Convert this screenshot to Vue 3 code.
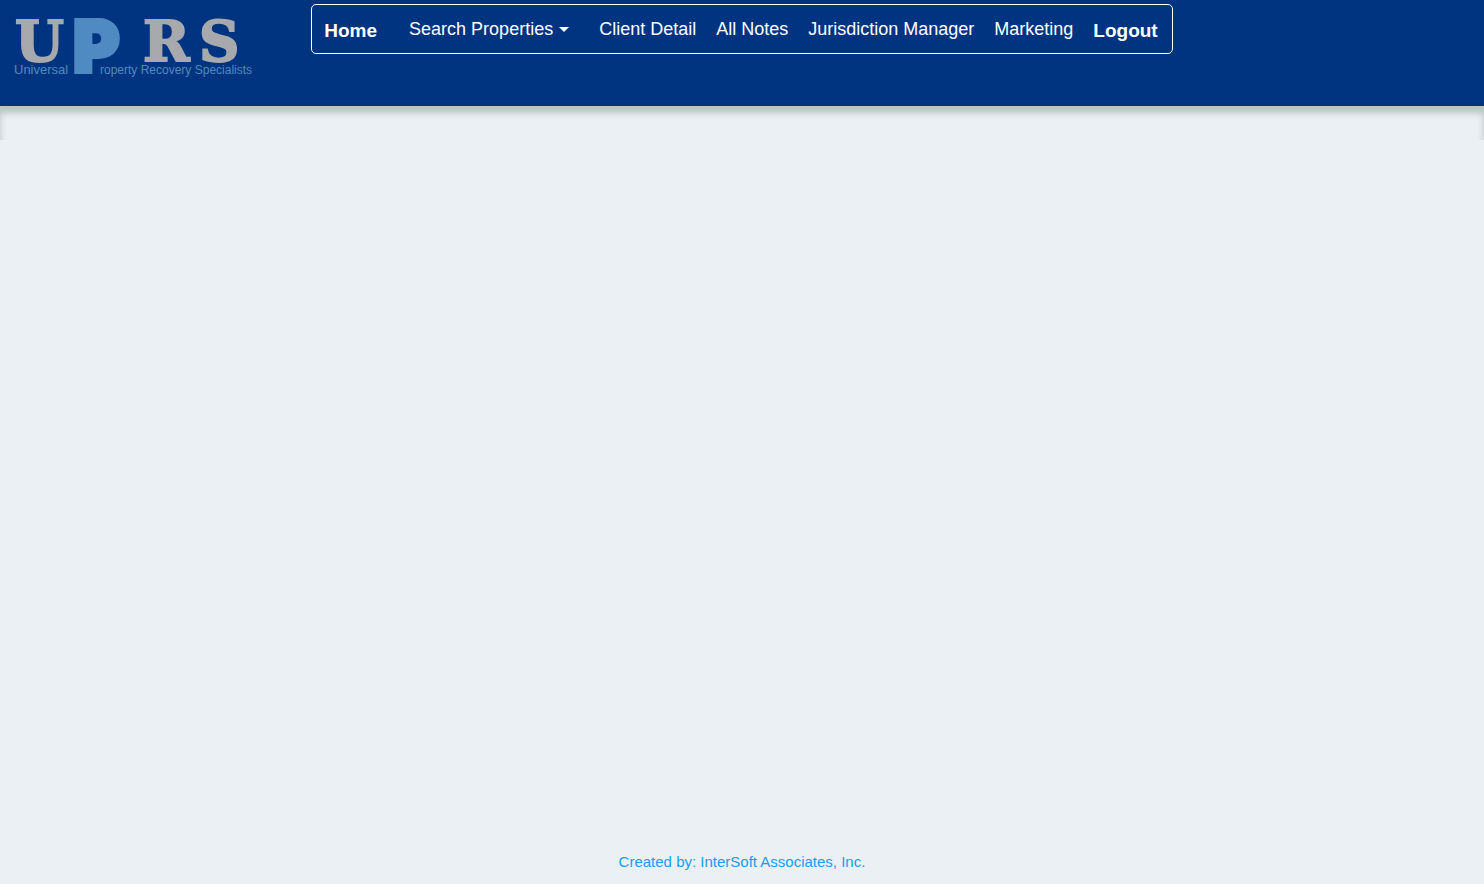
<script setup>
const links = ['Client Detail', 'All Notes', 'Jurisdiction Manager', 'Marketing']
</script>

<template>
  <div class="page">
    <header class="header">
      <a class="brand" href="#" aria-label="UPRS home">
        <svg class="logo" width="250" height="70" viewBox="0 0 250 70">
          <g class="initials">
            <text x="4" y="47">U</text>
            <text class="tall" x="62" y="58">P</text>
            <text x="132" y="47">R</text>
            <text x="188" y="47">S</text>
          </g>
          <g class="tagline">
            <text class="first" x="3" y="60">Universal</text>
            <text x="89" y="60">roperty Recovery Specialists</text>
          </g>
        </svg>
      </a>
      <nav class="nav">
        <a class="link strong" href="#">Home</a>
        <button class="link menu" type="button" aria-haspopup="true">
          Search Properties<span class="caret"></span>
        </button>
        <a v-for="label in links" :key="label" class="link" href="#">{{ label }}</a>
        <a class="link strong" href="#">Logout</a>
      </nav>
    </header>
    <main class="main">
      <div class="strip"></div>
    </main>
    <footer class="footer">
      <a class="credit" href="#">Created by: InterSoft Associates, Inc.</a>
    </footer>
  </div>
</template>

<style>
body {
  background: #ebf0f5;
}
</style>

<style scoped>
.page {
  display: flex;
  flex-direction: column;
  min-height: 100vh;
  font-family: "Liberation Sans", Arial, sans-serif;
}
.header {
  display: grid;
  grid-template-columns: 1fr auto 1fr;
  align-items: start;
  padding: 4px 0 22px;
  background: #003380;
}
.brand {
  padding: 10px 0 0 11px;
  line-height: 0;
}
.logo {
  overflow: visible;
}
.initials {
  font: bold 56px "DejaVu Serif", serif;
  fill: #a7a9ac;
  stroke: #a7a9ac;
  stroke-width: 2px;
}
.initials .tall {
  font: 900 71px Inter, "DejaVu Sans", sans-serif;
  fill: #4f8bc2;
  stroke: #4f8bc2;
  stroke-width: 4px;
}
.tagline {
  font: 12px "Liberation Sans", Arial, sans-serif;
  fill: #4f8bc2;
}
.tagline .first {
  font-size: 13px;
}
.nav {
  display: flex;
  align-items: center;
  gap: 20px;
  box-sizing: border-box;
  height: 50px;
  padding: 0 14px 0 12px;
  border: 1px solid #fff;
  border-radius: 5px;
}
.link {
  color: #fff;
  font-size: 18px;
  line-height: 22px;
  text-decoration: none;
  white-space: nowrap;
}
.strong {
  padding-top: 3px;
  font-size: 19px;
  font-weight: bold;
}
.menu {
  display: flex;
  align-items: center;
  gap: 6px;
  margin: 0 10px 0 12px;
  padding: 0;
  border: 0;
  background: none;
  font-family: inherit;
}
.caret {
  border: 5px solid transparent;
  border-top-color: #fff;
  border-bottom: 0;
}
.main {
  flex: 1;
}
.strip {
  height: 34px;
  box-shadow: inset 0 7px 7px rgba(0, 0, 0, 0.2);
}
.footer {
  padding: 0 0 12px;
  text-align: center;
}
.credit {
  color: #1b9af7;
  font-size: 15px;
  line-height: 20px;
  text-decoration: none;
}
</style>
